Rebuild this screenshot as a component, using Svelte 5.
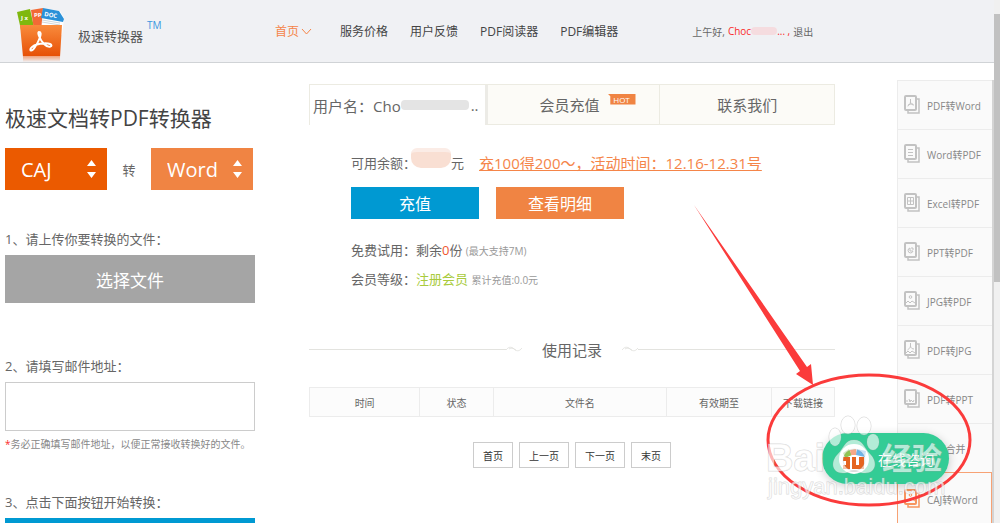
<script lang="ts">
	const nav = ['服务价格', '用户反馈', 'PDF阅读器', 'PDF编辑器'];
	const columns = ['时间', '状态', '文件名', '有效期至', '下载链接'];
	const pages = ['首页', '上一页', '下一页', '末页'];
	const tools = [
		{ name: 'PDF转Word', icon: 'pdf' },
		{ name: 'Word转PDF', icon: 'word' },
		{ name: 'Excel转PDF', icon: 'excel' },
		{ name: 'PPT转PDF', icon: 'ppt' },
		{ name: 'JPG转PDF', icon: 'jpg' },
		{ name: 'PDF转JPG', icon: 'pdfjpg' },
		{ name: 'PDF转PPT', icon: 'slide' },
		{ name: 'PDF合并', icon: 'pdf' },
		{ name: 'CAJ转Word', icon: 'jpg', active: true }
	];

	let from = $state('CAJ');
	let to = $state('Word');
	let email = $state('');
</script>

{#snippet updown()}
	<svg class="updown" width="9" height="18" viewBox="0 0 9 18" aria-hidden="true">
		<path d="M0 6 4.500 0 9 6ZM0 12h9l-4.500 6Z" fill="#fff" />
	</svg>
{/snippet}

{#snippet swirl()}
	<svg width="16" height="7" viewBox="0 0 16 7" fill="none" stroke="#dededa" aria-hidden="true">
		<path d="M0 4C3 0 6 1 8 3s5 3 8-1M3 3c3-2 5 0 7 1" stroke-width="0.800" />
	</svg>
{/snippet}

<div class="window">
	<div class="page">
		<header>
			<a class="brand" href="#home">
				<svg width="50" height="56" viewBox="0 0 50 56" aria-hidden="true">
					<defs>
						<linearGradient id="bucket" x2="0" y2="1">
							<stop offset="0" stop-color="#f98b3c" />
							<stop offset="1" stop-color="#e64f05" />
						</linearGradient>
						<linearGradient id="shade" x2="0" y2="1">
							<stop offset="0" stop-color="#f0a27c" />
							<stop offset="1" stop-color="#f0f1f4" />
						</linearGradient>
					</defs>
					<path d="m0 5 13-3 4 18-13 3Z" fill="#7fb80e" />
					<path d="m14 3 12-2 3 20-12 2Z" fill="#f26a35" />
					<path d="m26 1 17 3 4 7-2 17-21-3Z" fill="#fff" />
					<path d="m26 1 16 3 5 8-1 3-22-4Z" fill="#2b91d8" />
					<path d="m25 15 18 3M25 13l18 3" stroke="#cfd6da" />
					<path d="M3 18h42l-2 32H6Z" fill="url(#bucket)" />
					<path d="M6 49h37v6H6Z" fill="url(#shade)" />
					<g fill="#fff" font-size="6" font-weight="700">
						<text x="4" y="13">J x</text>
						<text x="17" y="10">PP</text>
						<text x="27" y="9" transform="rotate(9 27 9)">DOC</text>
					</g>
					<path
						d="M22 25c4 0 0 9-4 15-3 5-6 4-4 1 3-4 15-6 19-4s-1 5-6 0c-4-4-7-12-5-12Z"
						fill="none"
						stroke="#fff"
						stroke-width="2"
					/>
				</svg>
				<span>极速转换器</span><sup>TM</sup>
			</a>
			<nav>
				<a class="current" href="#home">
					首页
					<svg width="11" height="7" viewBox="0 0 11 7" fill="none" stroke="currentColor">
						<path d="m1 1 4.500 5L10 1" />
					</svg>
				</a>
				{#each nav as item}
					<a href="#nav">{item}</a>
				{/each}
			</nav>
			<p class="hello">
				上午好, <b>Choc<i></i>... ,</b> <a href="#logout">退出</a>
			</p>
		</header>

		<div class="body">
			<form class="convert" onsubmit={(e) => e.preventDefault()}>
				<h1>极速文档转PDF转换器</h1>
				<div class="formats">
					<div class="format from">
						<select bind:value={from} aria-label="CAJ">
							<option>CAJ</option>
							<option>PDF</option>
						</select>
						{@render updown()}
					</div>
					<span>转</span>
					<div class="format">
						<select bind:value={to} aria-label="Word">
							<option>Word</option>
							<option>PDF</option>
						</select>
						{@render updown()}
					</div>
				</div>
				<label class="step first" for="file">1、请上传你要转换的文件：</label>
				<button id="file" class="file" type="button">选择文件</button>
				<label class="step second" for="email">2、请填写邮件地址：</label>
				<input id="email" type="email" bind:value={email} />
				<p class="hint"><em>*</em>务必正确填写邮件地址，以便正常接收转换好的文件。</p>
				<label class="step third" for="start">3、点击下面按钮开始转换：</label>
				<button id="start" class="start" type="submit" aria-label="开始转换"></button>
			</form>

			<main>
				<div class="tabs">
					<button class="user">用户名：Cho<i></i>..</button>
					<button class="recharge">会员充值<span class="hot">HOT</span></button>
					<button>联系我们</button>
				</div>

				<section class="account">
					<div class="balance">
						<span>可用余额：</span><i></i><span>元</span>
						<a href="#promo">充100得200～，活动时间：12.16-12.31号</a>
					</div>
					<div class="actions">
						<button class="pay">充值</button>
						<button>查看明细</button>
					</div>
					<p>免费试用：剩余<em>0</em>份 <small>(最大支持7M)</small></p>
					<p>会员等级：<strong>注册会员</strong> <small>累计充值:0.0元</small></p>
				</section>

				<div class="heading">
					<hr />
					{@render swirl()}
					<h2>使用记录</h2>
					{@render swirl()}
					<hr />
				</div>

				<table>
					<colgroup>
						<col class="time" /><col class="state" /><col class="name" /><col class="expiry" /><col />
					</colgroup>
					<thead>
						<tr>
							{#each columns as column}
								<th>{column}</th>
							{/each}
						</tr>
					</thead>
				</table>

				<div class="pager">
					{#each pages as page}
						<button>{page}</button>
					{/each}
				</div>
			</main>

			<aside>
				{#each tools as tool}
					<a href="#tool" class:active={tool.active}>
						<svg width="16" height="20" viewBox="0 0 16 20" fill="none" stroke="currentColor">
							<path d="M13 4h2v14H4v-2" stroke-width="1.500" />
							<rect x="1" y="1" width="11" height="14" rx="1" stroke-width="2" />
							{#if tool.icon == 'pdf'}
								<path d="M6.500 4v3c0 2-2 4-3 4M6.500 7c0 2 2 3 3.500 3M4 10c2-1 3-1 5-1" />
							{:else if tool.icon == 'word'}
								<path d="M4 5.500h5M4 8.500h5M4 11.500h5" />
							{:else if tool.icon == 'excel'}
								<path d="M3.500 4.500h6v7h-6ZM6.500 4.500v7M3.500 8h6" />
							{:else if tool.icon == 'ppt'}
								<path d="M6 6a2.500 2.500 0 1 0 3 3H6ZM8 5v2h2" />
							{:else if tool.icon == 'jpg'}
								<circle cx="6.500" cy="6" r="1.300" />
								<path d="m2 12 2-2 2 2 2-2 3 2" />
							{:else if tool.icon == 'pdfjpg'}
								<path d="M6.500 3v3c0 2-2 3-3 4M6.500 6c0 2 2 3 3.500 3M2 13l2-2 2 2 2-2 3 2" />
							{:else}
								<path d="M3 11v2M5 10l1 3 1-2 2 2 1-2" />
							{/if}
						</svg>
						{tool.name}
					</a>
				{/each}
			</aside>
		</div>
	</div>
	<div class="scrollbar"><i></i></div>

	<button class="chat">
		<svg width="32" height="32" viewBox="0 0 32 32" aria-hidden="true">
			<circle cx="16" cy="16" r="15" fill="#fff" />
			<path d="m5 10 6-4 3 6-7 3Z" fill="#8fc452" />
			<path d="m12 7 6-1 1 6h-6Z" fill="#f6a887" />
			<path d="m19 6 9 2-1 6-9-2Z" fill="#6eb4e6" />
			<path d="M5 14h7v12H5v-4h3v-4H5ZM14 14h4v8h3v-8h5v12H14Z" fill="#e5641f" />
		</svg>
		在线咨询
	</button>

	<div class="notes" aria-hidden="true">
		<svg width="320" height="330" viewBox="0 0 320 330">
			<path d="m14 12 113 162 4-3 2 21-17-11 4-3Z" fill="#fb3b3b" />
			<ellipse cx="189" cy="247" rx="101" ry="65" fill="none" stroke="#fb3b3b" stroke-width="3" />
			<g class="mark">
				<path
					d="M174 247c9 0 10 8 16 14 8 8 6 19-5 19-5 0-7-2-11-2s-6 2-11 2c-11 0-13-11-5-19 6-6 7-14 16-14Zm0 9a11 11 0 1 0 .1 0Z"
					fill-rule="evenodd"
				/>
				<ellipse cx="155" cy="244" rx="6" ry="9" />
				<ellipse cx="168" cy="232" rx="7" ry="9" />
				<ellipse cx="184" cy="233" rx="7" ry="9" />
				<ellipse cx="193" cy="249" rx="6" ry="8" />
				<text x="86" y="278" font-size="38" font-weight="700">Bai</text>
				<text x="202" y="276" font-size="30" font-weight="700">经验</text>
				<text x="88" y="301" font-size="22">jingyan.baidu.com</text>
			</g>
		</svg>
	</div>
</div>

<style>
	:global(body) {
		margin: 0;
		background: #fff;
	}

	.window {
		position: relative;
		display: flex;
		height: 100vh;
		overflow: hidden;
		font-family: 'Open Sans', 'Noto Sans CJK SC', sans-serif;
		font-size: 13px;
		color: #666;
	}

	.window * {
		box-sizing: border-box;
	}

	.page {
		flex: 1;
		min-width: 0;
	}

	button,
	input,
	select {
		margin: 0;
		padding: 0;
		border: 0;
		border-radius: 0;
		font: inherit;
		color: inherit;
	}

	button {
		cursor: pointer;
	}

	a {
		color: inherit;
		text-decoration: none;
	}

	h1,
	h2,
	p {
		margin: 0;
		font-weight: 400;
	}

	em,
	b,
	strong {
		font-style: normal;
		font-weight: 400;
	}

	/* Header */

	header {
		display: flex;
		align-items: center;
		height: 63px;
		padding-left: 17px;
		border-bottom: 1px solid #d0d3d6;
		background: #f0f1f4;
	}

	.brand {
		display: flex;
		align-items: center;
		width: 258px;
	}

	.brand svg {
		margin-top: 7px;
	}

	.brand span {
		margin: 9px 4px 0 11px;
		color: #555;
	}

	.brand sup {
		align-self: flex-start;
		margin-top: 18px;
		font-size: 10px;
		line-height: 14px;
		color: #3a97e0;
	}

	nav {
		display: flex;
		gap: 22px;
		font-size: 12px;
		color: #444;
	}

	nav .current {
		display: flex;
		align-items: center;
		gap: 2px;
		margin-right: 6px;
		color: #f58549;
	}

	.hello {
		display: flex;
		align-items: center;
		gap: 3px;
		margin-left: 74px;
		font-size: 10px;
	}

	.hello b {
		display: flex;
		align-items: center;
		color: #fb2a2a;
	}

	.hello i {
		width: 26px;
		height: 8px;
		border-radius: 4px;
		background: #f5dcdf;
	}

	/* Columns */

	.body {
		display: grid;
		grid-template-columns: 250px 1fr 97px;
		padding-left: 5px;
	}

	.convert {
		display: flex;
		flex-direction: column;
		padding-top: 39px;
	}

	h1 {
		font-size: 21px;
		line-height: 32px;
		color: #444;
	}

	.formats {
		display: flex;
		align-items: center;
		justify-content: space-between;
		width: 248px;
		margin-top: 14px;
	}

	.format {
		display: grid;
		align-items: center;
		width: 102px;
		height: 42px;
		background: #f08443;
		color: #fff;
	}

	.format.from {
		background: #eb5a00;
	}

	.format > :global(*) {
		grid-area: 1 / 1;
	}

	.format select {
		appearance: none;
		height: 100%;
		padding-left: 16px;
		background: none;
		font-size: 20px;
	}

	.updown {
		justify-self: end;
		margin-right: 11px;
		pointer-events: none;
	}

	.step {
		margin-bottom: 6px;
		line-height: 20px;
	}

	.step.first {
		margin-top: 39px;
	}

	.step.second {
		margin-top: 53px;
	}

	.step.third {
		margin-top: 40px;
	}

	.file {
		height: 48px;
		background: #a5a5a5;
		font-size: 17px;
		color: #fff;
	}

	.convert input {
		height: 49px;
		padding: 0 8px;
		border: 1px solid #ccc;
	}

	.hint {
		margin-top: 5px;
		font-size: 10px;
		line-height: 16px;
		color: #888;
		white-space: nowrap;
	}

	.hint em {
		color: #fb2a2a;
	}

	.start {
		height: 48px;
		background: #0099d2;
	}

	/* Account */

	main {
		margin: 21px 62px 0 54px;
	}

	.tabs {
		display: grid;
		grid-template-columns: repeat(3, 1fr);
		height: 41px;
		border: 1px solid #ecebe2;
		border-bottom: 0;
		font-size: 15px;
	}

	.tabs button {
		border-bottom: 1px solid #ecebe2;
		border-left: 1px solid #ecebe2;
		background: #fcfbf7;
	}

	.tabs .user {
		display: flex;
		align-items: center;
		padding-left: 3px;
		border: 0;
		background: #fff;
		white-space: nowrap;
	}

	.user i {
		width: 68px;
		height: 10px;
		margin-right: 2px;
		border-radius: 4px;
		background: #e4e4e4;
	}

	.tabs .recharge {
		display: flex;
		align-items: center;
		justify-content: center;
		gap: 8px;
		padding-left: 28px;
		border-left: 3px solid #ecebe6;
	}

	.hot {
		width: 28px;
		height: 11px;
		margin-bottom: 11px;
		background: #f08443;
		clip-path: polygon(0 0, 100% 0, 100% 100%, 10% 100%, 10% 25%);
		font-size: 8px;
		line-height: 11px;
		color: #fff;
	}

	.account {
		padding: 23px 0 0 42px;
	}

	.balance {
		display: flex;
		align-items: center;
		height: 28px;
		white-space: nowrap;
	}

	.balance i {
		width: 40px;
		height: 20px;
		margin: -8px 0 0 -5px;
		border-top: 4px solid #fbece6;
		border-radius: 6px 6px 10px 10px;
		background: #f9dfd3;
	}

	.balance a {
		margin-left: 15px;
		font-size: 15px;
		color: #f58549;
		text-decoration: underline;
	}

	.actions {
		display: flex;
		gap: 17px;
		margin: 11px 0 17px;
	}

	.actions button {
		width: 128px;
		height: 32px;
		background: #f08443;
		font-size: 16px;
		color: #fff;
	}

	.actions .pay {
		background: #0099d2;
	}

	.account p {
		line-height: 28px;
	}

	.account em {
		color: #f0562f;
	}

	.account strong {
		color: #a9cb3c;
	}

	.account small {
		font-size: 10px;
		color: #999;
	}

	.heading {
		display: flex;
		align-items: center;
		height: 28px;
		margin-top: 41px;
	}

	hr {
		flex: 1;
		margin: 0;
		border: 0;
		border-top: 1px solid #e3e3df;
	}

	h2 {
		margin: 0 20px;
		font-size: 15px;
	}

	table {
		width: 100%;
		margin-top: 24px;
		border-collapse: collapse;
		table-layout: fixed;
	}

	.time {
		width: 21%;
	}

	.state {
		width: 14%;
	}

	.name {
		width: 33%;
	}

	.expiry {
		width: 20%;
	}

	th {
		height: 29px;
		padding: 0;
		border: 1px solid #ececec;
		background: #fcfcfc;
		font-size: 10px;
		font-weight: 400;
	}

	.pager {
		display: flex;
		justify-content: center;
		gap: 6px;
		margin-top: 25px;
	}

	.pager button {
		height: 26px;
		padding: 0 9px;
		border: 1px solid #ccc;
		background: #fff;
		font-size: 10px;
		color: #333;
	}

	/* Tool list */

	aside {
		margin-top: 17px;
		border: solid #d4d4d4;
		border-width: 0 2px 0 0;
	}

	aside a {
		display: flex;
		align-items: center;
		gap: 7px;
		height: 49px;
		padding-left: 6px;
		border: 1px solid #ececec;
		border-width: 1px 0 0 1px;
		background: #fafafa;
		font-size: 10px;
		color: #888;
		white-space: nowrap;
	}

	aside svg {
		color: #c2c2c2;
	}

	aside .active {
		height: 53px;
		border-color: #f7a274;
		border-right-width: 1px;
	}

	.active svg {
		color: #f7955f;
	}

	.scrollbar {
		width: 6px;
		padding-top: 14px;
		background: #f0f0f0;
	}

	.scrollbar i {
		display: block;
		height: 268px;
		background: #c1c1c1;
	}

	/* Floating layers */

	.chat {
		position: absolute;
		right: 51px;
		bottom: 39px;
		display: flex;
		align-items: center;
		gap: 8px;
		width: 127px;
		height: 51px;
		padding-left: 16px;
		border-radius: 26px;
		background: #33cc95;
		box-shadow: 0 2px 10px #0003;
		font-size: 14px;
		color: #fff;
		white-space: nowrap;
	}

	.notes {
		position: absolute;
		right: 0;
		bottom: 0;
		height: 330px;
		pointer-events: none;
	}

	.mark {
		fill: #ffffffa0;
		stroke: #a0a0a066;
		paint-order: stroke;
		font-family: 'Liberation Sans', 'Noto Sans CJK SC', sans-serif;
	}
</style>
